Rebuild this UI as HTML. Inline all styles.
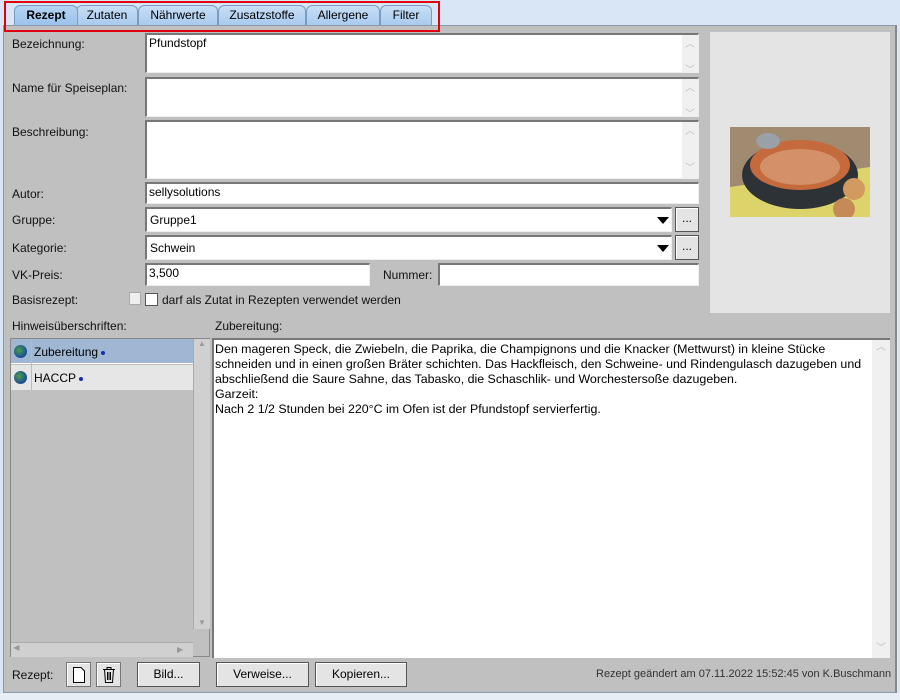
<!DOCTYPE html>
<html><head><meta charset="utf-8"><style>
*{box-sizing:border-box}
body{margin:0;width:900px;height:700px;background:#d9e6f5;font-family:"Liberation Sans",Arial,sans-serif;font-size:12px;color:#000;position:relative;overflow:hidden}
.a{position:absolute}
.panel{left:3px;top:25px;width:894px;height:668px;background:#c0c0c0;border:1px solid #8a9aaa;border-right:2px solid #888}
.lbl{position:absolute;font-size:12px;color:#111}
.tf{position:absolute;background:#fff;border-top:2px solid #777;border-left:2px solid #777;border-bottom:1px solid #eee;border-right:1px solid #eee;padding:1px 2px;font-size:12px}
.sb{position:absolute;right:0;top:0;bottom:0;width:16px;background:#f0f0f0;color:#bbb;font-size:10px;text-align:center}
.btn{position:absolute;background:#e4e4e4;border:1px solid #555;box-shadow:inset 1px 1px #fff;text-align:center;font-size:12px}
.tab{position:absolute;top:5px;height:20px;background:linear-gradient(#c8def5,#a9cbef);border:1px solid #7a9cc0;border-bottom:none;border-radius:6px 6px 0 0;text-align:center;line-height:19px;font-size:12px}
.arr{position:absolute;right:30px;top:8px;width:0;height:0;border-left:6px solid transparent;border-right:6px solid transparent;border-top:7px solid #000}
.dot{display:inline-block;width:4px;height:4px;border-radius:50%;background:#1a2aa8;margin-left:3px;vertical-align:middle}
.glob{position:absolute;left:3px;width:13px;height:13px;border-radius:50%;background:radial-gradient(circle at 40% 40%,#4aa04a,#1a4a9a 70%,#123)}
</style></head><body>
<div class="a" style="left:4px;top:1px;width:436px;height:31px;border:2px solid #e00010;z-index:5"></div>
<div class="tab" style="left:14px;width:64px;background:linear-gradient(#b5d3f3,#9cc3ee);font-weight:bold;z-index:2">Rezept</div>
<div class="tab" style="left:76px;width:62px">Zutaten</div>
<div class="tab" style="left:138px;width:80px">Nährwerte</div>
<div class="tab" style="left:218px;width:88px">Zusatzstoffe</div>
<div class="tab" style="left:306px;width:74px">Allergene</div>
<div class="tab" style="left:380px;width:52px">Filter</div>
<div class="a panel"></div>

<div class="lbl" style="left:12px;top:37px">Bezeichnung:</div>
<div class="tf" style="left:145px;top:33px;width:554px;height:40px">Pfundstopf<div class="sb">︿<br><br>﹀</div></div>
<div class="lbl" style="left:12px;top:81px">Name für Speiseplan:</div>
<div class="tf" style="left:145px;top:77px;width:554px;height:40px"><div class="sb">︿<br><br>﹀</div></div>
<div class="lbl" style="left:12px;top:125px">Beschreibung:</div>
<div class="tf" style="left:145px;top:120px;width:554px;height:59px"><div class="sb">︿<br><br><br>﹀</div></div>
<div class="lbl" style="left:12px;top:187px">Autor:</div>
<div class="tf" style="left:145px;top:182px;width:554px;height:22px">sellysolutions</div>
<div class="lbl" style="left:12px;top:213px">Gruppe:</div>
<div class="tf" style="left:145px;top:207px;width:527px;height:25px;padding:4px 3px">Gruppe1<div class="arr" style="right:2px"></div></div>
<div class="btn" style="left:675px;top:207px;width:24px;height:25px;line-height:20px">...</div>
<div class="lbl" style="left:12px;top:241px">Kategorie:</div>
<div class="tf" style="left:145px;top:235px;width:527px;height:25px;padding:4px 3px">Schwein<div class="arr" style="right:2px"></div></div>
<div class="btn" style="left:675px;top:235px;width:24px;height:25px;line-height:20px">...</div>
<div class="lbl" style="left:12px;top:268px">VK-Preis:</div>
<div class="tf" style="left:145px;top:263px;width:225px;height:23px">3,500</div>
<div class="lbl" style="left:383px;top:268px">Nummer:</div>
<div class="tf" style="left:438px;top:263px;width:261px;height:23px"></div>
<div class="lbl" style="left:12px;top:293px">Basisrezept:</div>
<div class="a" style="left:129px;top:292px;width:12px;height:13px;background:#eee;border:1px solid #aaa"></div>
<div class="a" style="left:145px;top:293px;width:13px;height:13px;background:#fff;border:1px solid #555"></div>
<div class="lbl" style="left:162px;top:293px">darf als Zutat in Rezepten verwendet werden</div>

<div class="a" style="left:710px;top:32px;width:180px;height:281px;background:#e4e4e4"></div>
<svg class="a" style="left:730px;top:127px" width="140" height="90" viewBox="0 0 140 90">
<rect width="140" height="90" fill="#a08a70"/><path d="M0 60 L0 90 140 90 140 40 Q70 50 0 60Z" fill="#dcd46a"/>
<ellipse cx="70" cy="48" rx="58" ry="34" fill="#2c3236"/><ellipse cx="70" cy="38" rx="50" ry="25" fill="#c56a3c"/>
<ellipse cx="70" cy="40" rx="40" ry="18" fill="#d49068"/><ellipse cx="38" cy="14" rx="12" ry="8" fill="#9aa0a8"/>
<circle cx="124" cy="62" r="11" fill="#d39a60"/><circle cx="114" cy="82" r="11" fill="#c58a55"/></svg>

<div class="lbl" style="left:12px;top:319px">Hinweisüberschriften:</div>
<div class="lbl" style="left:215px;top:319px">Zubereitung:</div>
<div class="a" style="left:10px;top:338px;width:200px;height:319px;border:1px solid #888;background:#c0c0c0">
 <div class="a" style="left:0;top:0;width:182px;height:25px;background:#9fb7d2;border-bottom:1px solid #fff"><div class="glob" style="top:6px"></div><span class="a" style="left:23px;top:6px">Zubereitung<span class="dot"></span></span></div>
 <div class="a" style="left:0;top:26px;width:182px;height:25px;background:#e6e6e6"><div class="glob" style="top:6px"></div><span class="a" style="left:23px;top:6px">HACCP<span class="dot"></span></span></div>
 <div class="a" style="left:20px;top:0;width:1px;height:51px;background:#bbb"></div>
 <div class="a" style="left:182px;top:0;width:17px;height:290px;background:#d0d0d0;border-left:1px solid #aaa;color:#999;font-size:8px;text-align:center">▲<div class="a" style="bottom:2px;left:4px">▼</div></div>
 <div class="a" style="left:0;top:303px;width:182px;height:15px;background:#d0d0d0;border-top:1px solid #aaa;color:#999;font-size:8px">&nbsp;◀<span class="a" style="left:166px;top:2px">▶</span></div>
</div>
<div class="a" style="left:212px;top:338px;width:678px;height:320px;background:#fff;border-top:2px solid #777;border-left:2px solid #777;padding:2px 16px 2px 1px;line-height:15px;font-size:12.4px">Den mageren Speck, die Zwiebeln, die Paprika, die Champignons und die Knacker (Mettwurst) in kleine Stücke schneiden und in einen großen Bräter schichten. Das Hackfleisch, den Schweine- und Rindengulasch dazugeben und abschließend die Saure Sahne, das Tabasko, die Schaschlik- und Worchestersoße dazugeben.<br>Garzeit:<br>Nach 2 1/2 Stunden bei 220°C im Ofen ist der Pfundstopf servierfertig.<div class="sb" style="width:18px;top:0">︿<div class="a" style="bottom:2px;left:4px">﹀</div></div></div>

<div class="lbl" style="left:12px;top:668px">Rezept:</div>
<div class="btn" style="left:66px;top:662px;width:25px;height:25px;border-color:#777"><svg width="14" height="18" style="margin-top:3px"><path d="M1.5 1.5H9L12.5 5V16.5H1.5Z" fill="#fff" stroke="#000"/></svg></div>
<div class="btn" style="left:96px;top:662px;width:25px;height:25px;border-color:#777"><svg width="14" height="18" style="margin-top:3px"><path d="M1 3.5H13M5 3.5V1.5H9V3.5M2.5 3.5L3.5 16.5H10.5L11.5 3.5M5.5 6V14M7 6V14M8.5 6V14" fill="none" stroke="#000"/></svg></div>
<div class="btn" style="left:137px;top:662px;width:63px;height:25px;line-height:23px">Bild...</div>
<div class="btn" style="left:216px;top:662px;width:93px;height:25px;line-height:23px">Verweise...</div>
<div class="btn" style="left:315px;top:662px;width:92px;height:25px;line-height:23px">Kopieren...</div>
<div class="lbl" style="left:596px;top:668px;font-size:11px;color:#333">Rezept geändert am 07.11.2022 15:52:45 von K.Buschmann</div>
<div class="a" style="left:0;top:693px;width:900px;height:7px;background:#e8eef5"></div>
</body></html>
